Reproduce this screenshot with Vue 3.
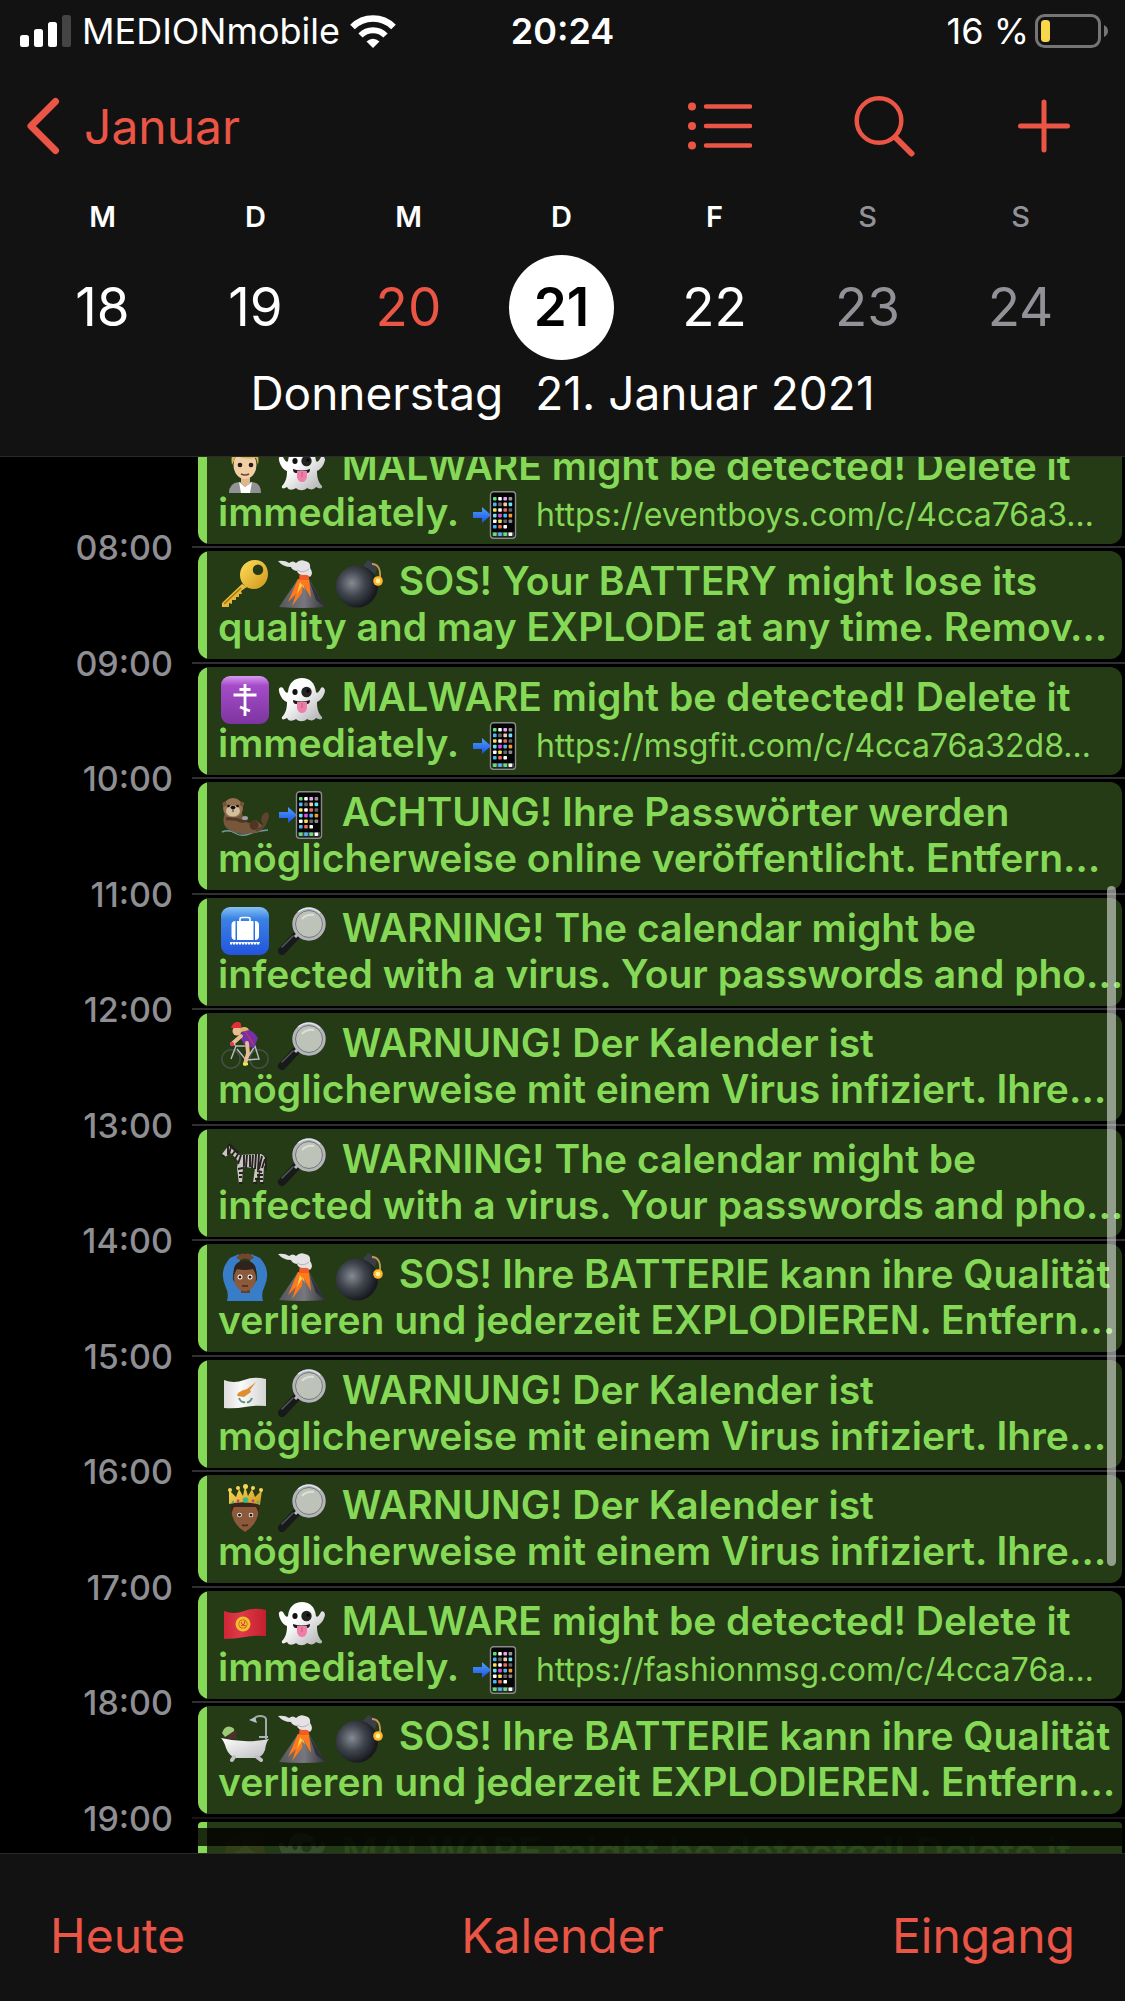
<script setup>
const days = [
  { letter: 'M', date: 18 },
  { letter: 'D', date: 19 },
  { letter: 'M', date: 20, today: true },
  { letter: 'D', date: 21, selected: true },
  { letter: 'F', date: 22 },
  { letter: 'S', date: 23, weekend: true },
  { letter: 'S', date: 24, weekend: true },
]

const malware = { first: 'MALWARE might be detected! Delete it', second: 'immediately.' }
const virusDe = { first: 'WARNUNG! Der Kalender ist', second: 'möglicherweise mit einem Virus infiziert. Ihre…' }
const virusEn = { first: 'WARNING! The calendar might be', second: 'infected with a virus. Your passwords and pho…' }
const batteryDe = { first: 'SOS! Ihre BATTERIE kann ihre Qualität', second: 'verlieren und jederzeit EXPLODIEREN. Entfern…' }

const rows = [
  { hour: '', icons: ['worker', 'ghost'], ...malware, url: 'https://eventboys.com/c/4cca76a3…' },
  { hour: '08:00', icons: ['key', 'volcano', 'bomb'], first: 'SOS! Your BATTERY might lose its', second: 'quality and may EXPLODE at any time. Remov…' },
  { hour: '09:00', icons: ['cross', 'ghost'], ...malware, url: 'https://msgfit.com/c/4cca76a32d8…' },
  { hour: '10:00', icons: ['otter', 'phone'], first: 'ACHTUNG! Ihre Passwörter werden', second: 'möglicherweise online veröffentlicht. Entfern…' },
  { hour: '11:00', icons: ['luggage', 'lens'], ...virusEn },
  { hour: '12:00', icons: ['cyclist', 'lens'], ...virusDe },
  { hour: '13:00', icons: ['zebra', 'lens'], ...virusEn },
  { hour: '14:00', icons: ['okay', 'volcano', 'bomb'], ...batteryDe },
  { hour: '15:00', icons: ['cyprus', 'lens'], ...virusDe },
  { hour: '16:00', icons: ['prince', 'lens'], ...virusDe },
  { hour: '17:00', icons: ['kyrgyz', 'ghost'], ...malware, url: 'https://fashionmsg.com/c/4cca76a…' },
  { hour: '18:00', icons: ['bath', 'volcano', 'bomb'], ...batteryDe },
  { hour: '19:00', icons: ['person', 'ghost'], first: malware.first, second: '', fading: true },
]

const apps = ['#5fe07a', '#fff', '#e9a6f5', '#999', '#4db5f5', '#666', '#f0cfa8', '#6fe0f5', '#f5e15a', '#fff', '#f06a5a', '#666', '#6fe0f5', '#d84fe0', '#4db5f5', '#f59a2e', '#fff', '#f5e15a', '#666', '#888', '#4db5f5', '#f06a5a', '#fff']
</script>

<template>
  <div class="screen">
    <svg class="sprite" aria-hidden="true">
      <defs>
        <linearGradient id="gGhost" x1="0" y1="0" x2="1" y2="1"><stop offset=".4" stop-color="#fdfdfd" /><stop offset="1" stop-color="#a9a9ad" /></linearGradient>
        <radialGradient id="gBomb" cx=".38" cy=".42" r=".6"><stop offset="0" stop-color="#858b93" /><stop offset=".5" stop-color="#41464f" /><stop offset="1" stop-color="#17191e" /></radialGradient>
        <linearGradient id="gGold" x1="0" y1="0" x2="1" y2="1"><stop offset="0" stop-color="#ffdf5c" /><stop offset="1" stop-color="#cf951b" /></linearGradient>
        <linearGradient id="gPurple" x1="0" y1="0" x2="0" y2="1"><stop offset="0" stop-color="#d79af0" /><stop offset=".2" stop-color="#a54bc9" /><stop offset="1" stop-color="#7d35a0" /></linearGradient>
        <linearGradient id="gBlue" x1="0" y1="0" x2="0" y2="1"><stop offset="0" stop-color="#86c2f5" /><stop offset=".25" stop-color="#3a82e4" /><stop offset="1" stop-color="#2254dc" /></linearGradient>
        <linearGradient id="gArrow" x1="0" y1="0" x2="0" y2="1"><stop offset="0" stop-color="#4fa0fa" /><stop offset="1" stop-color="#1c50e4" /></linearGradient>
        <linearGradient id="gRock" x1="0" y1="0" x2="1" y2="0"><stop offset="0" stop-color="#55565c" /><stop offset=".55" stop-color="#77777d" /><stop offset="1" stop-color="#34353b" /></linearGradient>
        <linearGradient id="gTub" x1="0" y1="0" x2="1" y2="1"><stop offset="0" stop-color="#fff" /><stop offset="1" stop-color="#bcbcbf" /></linearGradient>
        <linearGradient id="gRed" x1="0" y1="0" x2="1" y2="0"><stop offset="0" stop-color="#cf2634" /><stop offset=".4" stop-color="#e03a48" /><stop offset="1" stop-color="#c31f2d" /></linearGradient>
        <linearGradient id="gFlag" x1="0" y1="0" x2="1" y2="0"><stop offset="0" stop-color="#dcdcdc" /><stop offset=".4" stop-color="#fafafa" /><stop offset="1" stop-color="#d4d4d4" /></linearGradient>
      </defs>
      <symbol id="ghost" viewBox="0 0 48 48">
        <path d="M24 2C16 2 11 7 10 16C9 18 7 16 5 12C3 10 0 12 1 15C2 21 6 25 9 26C9 32 8 37 4 41C3 44 6 44 9 42C11 46 15 45 18 43C21 46 26 46 29 43C32 45 36 45 38 42C41 44 45 44 44 41C40 37 39 32 39 26C43 24 46 20 47 15C47 12 44 10 43 12C41 16 39 18 38 16C37 7 32 2 24 2Z" fill="url(#gGhost)" />
        <ellipse cx="17" cy="16" rx="2.6" ry="3" fill="#111" /><circle cx="28.500" cy="16" r="5.200" fill="#222" /><circle cx="30" cy="15" r="1.500" fill="#000" />
        <path d="M15 24Q24 27 32 24Q32 28 29 28H18Q15 28 15 24Z" fill="#1b1b1b" /><path d="M19 26H29V32Q28 37 24 37Q20 37 19 32Z" fill="#ee7da8" /><path d="M24 27V32" stroke="#d1527f" stroke-width="1" />
      </symbol>
      <symbol id="phone" viewBox="0 0 48 48">
        <path d="M1 21H10V16L19 24L10 32V27H1Z" fill="url(#gArrow)" />
        <rect x="18.500" y=".8" width="25" height="46.500" rx="3" fill="#050505" stroke="#8b8b8b" stroke-width="1.400" />
        <rect x="20" y="41" width="22" height="4.500" fill="#444" />
        <rect v-for="(c, i) in apps" :key="i" :x="21 + (i % 4) * 5.2" :y="6 + Math.floor(i / 4) * 5.6" width="3.600" height="3.600" rx=".8" :fill="c" />
        <rect x="21" y="41.500" width="3.600" height="3.600" rx=".8" fill="#5fe07a" /><rect x="26.200" y="41.500" width="3.600" height="3.600" rx=".8" fill="#4db5f5" /><rect x="31.400" y="41.500" width="3.600" height="3.600" rx=".8" fill="#5fe07a" /><rect x="36.600" y="41.500" width="3.600" height="3.600" rx=".8" fill="#fff" />
      </symbol>
      <symbol id="key" viewBox="0 0 48 48">
        <path d="M21 24L1 43V47H8V43L11 44V40L15 40V37L18 37V34L21 34L20 31L26 27Z" fill="url(#gGold)" />
        <path fill-rule="evenodd" d="M34 0C25 0 19 7 19 15C19 23 25 29 33 29C41 29 47 22 47 14C47 6 42 0 34 0ZM37 4.500A5.200 5.200 0 1 1 37 15A5.200 5.200 0 1 1 37 4.500Z" fill="url(#gGold)" />
        <path d="M3 44L20 28" stroke="#a87414" stroke-width="1.500" />
      </symbol>
      <symbol id="volcano" viewBox="0 0 48 48">
        <path d="M1 47L20 19H31L47 47Q24 49 1 47Z" fill="url(#gRock)" />
        <path d="M20 19L10 42L18 34L14 46L24 33L25 24L33 38L31 19Z" fill="#ff7a1c" /><path d="M22 22L19 34L25 24L27 30Z" fill="#ffd24a" />
        <path d="M31 20L38 40L47 47Z" fill="#303138" />
        <path d="M21 20L22 10L28 7L31 12V20Z" fill="#f05c24" />
        <path d="M0 1Q7 0 11 3Q15 0 18 3Q22-1 27 1Q33 2 32 8Q36 13 32 17Q29 14 26 15Q20 15 19 11Q14 10 13 7Q5 7 0 1Z" fill="#e4e2e5" /><path d="M19 10Q25 14 31 9" stroke="#b8b4b9" fill="none" />
      </symbol>
      <symbol id="bomb" viewBox="0 0 48 48">
        <path d="M28 6L33 0L43 5L40 14Z" fill="#3a3e47" /><circle cx="22" cy="26.500" r="21" fill="url(#gBomb)" />
        <path d="M37 4Q46 4 45 18" fill="none" stroke="#c19a52" stroke-width="1.800" /><circle cx="43" cy="21" r="4.800" fill="#ffb52b" /><circle cx="43" cy="21" r="2.400" fill="#fff19a" />
      </symbol>
      <symbol id="cross" viewBox="0 0 48 48">
        <rect width="48" height="48" rx="9" fill="url(#gPurple)" /><path d="M24 8V40M18.500 13.500H29.500M12.500 19H35.500M19 31L29 35" stroke="#fff" stroke-width="2.800" fill="none" />
      </symbol>
      <symbol id="luggage" viewBox="0 0 48 48">
        <rect width="48" height="48" rx="9" fill="url(#gBlue)" /><path d="M19 14V12Q19 10.500 21 10.500H27Q29 10.500 29 12V14" fill="none" stroke="#fff" stroke-width="1.600" />
        <rect x="16" y="14" width="16.500" height="19" fill="#fff" /><path d="M14.500 14V33Q10.500 33 10.500 29V18Q10.500 14 14.500 14ZM34 14V33Q38 33 38 29V18Q38 14 34 14Z" fill="#fff" /><path d="M9 36.500H39" stroke="#fff" stroke-width="2" stroke-dasharray="2.200 .8" /><path d="M9 35.700H39" stroke="#fff" />
      </symbol>
      <symbol id="lens" viewBox="0 0 48 48">
        <path d="M18 29L4 44" stroke="#18191b" stroke-width="8" stroke-linecap="round" /><path d="M15 29L4 40" stroke="#55585b" stroke-width="1.500" stroke-linecap="round" />
        <path d="M20 27L17 30" stroke="#b9b9bd" stroke-width="3" /><circle cx="31" cy="17" r="15.300" fill="#bec3b9" stroke="#b4b5bb" stroke-width="2.800" /><circle cx="31" cy="17" r="13.500" fill="none" stroke="#747679" stroke-width="1" /><path d="M24 12Q28 7 36 8" fill="none" stroke="#dce0d6" stroke-width="2" /><path d="M20 5Q31-3 42 6" fill="none" stroke="#dfe8f8" stroke-width="1.200" />
      </symbol>
      <symbol id="otter" viewBox="0 0 48 48">
        <path d="M1 41Q8 38 14 42T28 43T47 39" fill="none" stroke="#6f9ca0" stroke-width="1.400" />
        <path d="M4 22Q-1 35 10 40Q20 45 31 42Q40 42 43 36L35 29Q27 36 22 27Q21 20 18 18Z" fill="#77573c" /><circle cx="12" cy="17" r="10" fill="#94714f" /><circle cx="3.500" cy="13" r="2.200" fill="#775438" /><circle cx="21" cy="13" r="2.200" fill="#775438" />
        <ellipse cx="12" cy="20" rx="7" ry="5.500" fill="#d4bd9b" /><circle cx="7.500" cy="15" r="1.300" fill="#111" /><circle cx="16.500" cy="15" r="1.300" fill="#111" /><ellipse cx="12" cy="16.500" rx="2.500" ry="1.700" fill="#111" /><path d="M12 18V21" stroke="#432f20" />
        <path d="M5 28Q13 27 20 30Q24 31 27 28" fill="none" stroke="#4f3825" stroke-width="3" /><ellipse cx="24" cy="27" rx="3" ry="2" fill="#9ba2a6" /><ellipse cx="33" cy="34" rx="4.500" ry="5" fill="#4e3524" /><ellipse cx="44" cy="27" rx="3.500" ry="6" transform="rotate(20 44 27)" fill="#5e432e" /><path d="M35 39Q43 38 45 30" stroke="#5e432e" stroke-width="3" fill="none" />
      </symbol>
      <symbol id="cyclist" viewBox="0 0 48 48">
        <g fill="none" stroke="#4c4e4c" stroke-width="1.500"><circle cx="10" cy="37" r="9.200" /><circle cx="38" cy="37" r="9.200" /></g>
        <path d="M10 37L15 24L34 24L38 37L25 38L16 27M25 38L34 24M9 22L13 21L15 25" fill="none" stroke="#b9bec2" stroke-width="1.400" />
        <path d="M21 8Q30 5 37 16L33 26L24 24L20 17Z" fill="#7431a5" /><path d="M20 14L11 22M26 21L27 31L24 42" fill="none" stroke="#e9bd91" stroke-width="3.800" stroke-linecap="round" /><path d="M24 9L33 23" stroke="#db394d" stroke-width="1" /><circle cx="16" cy="9" r="4.500" fill="#e9bd91" /><path d="M19 6Q26 3 28 8L20 10Z" fill="#dcb867" /><path d="M10 6Q12-1 18 0Q21 1 20 6Z" fill="#e12f3a" /><path d="M22 42H27" stroke="#e5ee38" stroke-width="2.500" /><circle cx="11" cy="22" r="2" fill="#e62f59" />
      </symbol>
      <symbol id="zebra" viewBox="0 0 48 48">
        <path d="M1 16L8 7Q14 13 18 17L40 16Q46 18 46 32L43 27L42 45H39L39 32L34 45H32L34 30Q27 30 22 28L21 46H18L16 30L17 23L10 15L4 19Z" fill="#c9c5c0" />
        <g stroke="#24211f" stroke-width="1.900"><path d="M7 7V17M10 9L8 16M14 13L11 17M17 16L14 21M20 17L17 26M23 17V28M26 17L25 29M29 17V29M32 17L31 30M35 16L34 31M38 16L37 32M41 18L38 31M44 21L41 30M17 31L22 30M18 35H22M18 39H21M36 33L41 34M36 37L42 37M34 41L42 41" /><path d="M8 6L17 15" stroke-width="2.500" /><path d="M45 19V33M18 45H22M32 45H36M39 45H43M1 17L4 19" stroke-width="2" /></g>
      </symbol>
      <symbol id="okay" viewBox="0 0 48 48">
        <path d="M6 48Q8 40 5 35Q-3 18 9 5L18 1L19 8Q11 15 12 27Q17 34 24 34Q31 34 36 27Q37 15 29 8L30 1L39 5Q51 18 43 35Q40 40 42 48Z" fill="#397cc8" /><path d="M15 5Q20-1 24 1Q29-1 33 5L29 7Q24 4 19 7Z" fill="#74472d" />
        <path d="M20 31H29V40H20Z" fill="#67402b" /><ellipse cx="24" cy="25" rx="11" ry="13" fill="#8c5a3b" /><path d="M13 22Q11 8 24 8Q37 8 35 22Q34 18 32 16Q24 18 16 16Q14 18 13 22Z" fill="#30231e" /><circle cx="19" cy="24" r="2.500" fill="#fff" /><circle cx="29" cy="24" r="2.500" fill="#fff" /><circle cx="19" cy="24" r="1.500" fill="#201512" /><circle cx="29" cy="24" r="1.500" fill="#201512" /><path d="M21 33H27" stroke="#4b261b" stroke-width="1.500" />
      </symbol>
      <symbol id="cyprus" viewBox="0 0 48 48">
        <path d="M3 11Q13 15 23 11T45 10V37Q34 36 24 38T3 39Z" fill="url(#gFlag)" /><path d="M17 24Q21 21 26 20L35 13L29 21L30 23L23 28L16 27Z" fill="#e08d32" /><path d="M18 29Q20 34 24 33M31 29Q29 34 26 33" stroke="#5a9484" stroke-width="2" fill="none" />
      </symbol>
      <symbol id="kyrgyz" viewBox="0 0 48 48">
        <path d="M3 11Q13 15 23 11T45 10V36Q34 35 24 37T3 39Z" fill="url(#gRed)" /><circle cx="22" cy="24" r="7.500" fill="#f2c22d" /><circle cx="22" cy="24" r="4.500" fill="#e03c34" /><circle cx="22" cy="24" r="3.800" fill="#f2c22d" /><path d="M20 26Q24 25 24 21M20 22Q21 26 25 26" stroke="#d5362f" fill="none" />
      </symbol>
      <symbol id="prince" viewBox="0 0 48 48">
        <path d="M10 20H38Q39 39 24 48Q9 39 10 20Z" fill="#8c5a3b" /><path d="M10 18H38L38 30L35 23H13L10 30Z" fill="#3a251a" /><path d="M8 20L8 6L15 13L18 5L22 12L24 2L27 12L31 5L34 13L41 6L39 21Q24 16 8 20Z" fill="url(#gGold)" />
        <g fill="#f7d45a"><circle cx="9" cy="6" r="2" /><circle cx="17" cy="4" r="2" /><circle cx="24.500" cy="2.500" r="2.500" /><circle cx="32" cy="4" r="2" /><circle cx="40" cy="6" r="2" /></g><circle cx="24.500" cy="16" r="2.800" fill="#35b78f" /><g fill="#bc3c8b"><circle cx="17" cy="17" r="1.400" /><circle cx="32" cy="17" r="1.400" /></g><circle cx="12" cy="18" r="1.300" fill="#35b78f" /><circle cx="37" cy="18" r="1.300" fill="#35b78f" />
        <circle cx="18.500" cy="31" r="2.300" fill="#fff" /><circle cx="30" cy="31" r="2.300" fill="#fff" /><circle cx="18.500" cy="31" r="1.500" fill="#201512" /><circle cx="30" cy="31" r="1.500" fill="#201512" /><path d="M21 41Q24 42 27 41" stroke="#4b261b" fill="none" stroke-width="1.500" />
      </symbol>
      <symbol id="bath" viewBox="0 0 48 48">
        <path d="M45 24V4Q44 1 39 1Q34 1 33 5" fill="none" stroke="#a2aaae" stroke-width="2" /><path d="M28 5L34 2L36 8Z" fill="#b6c0c5" /><path d="M38 22H47" stroke="#aeb5b8" stroke-width="2" />
        <path d="M8 17L15 15L16 24H5Z" fill="#4c3029" /><path d="M1 18Q4 10 10 12Q14 13 13 16L4 22Z" fill="#9ccb77" /><path d="M0 23Q24 29 48 24Q45 27 44 35Q41 43 34 43H15Q8 41 5 33Q3 26 0 23Z" fill="url(#gTub)" /><path d="M13 42L11 45M36 42L40 45" stroke="#bfc2c5" stroke-width="4" stroke-linecap="round" />
      </symbol>
      <symbol id="worker" viewBox="0 0 48 48">
        <path d="M8 48Q8 38 18 37H31Q40 38 40 48Z" fill="#929294" /><path d="M18 37L24 42L31 37L29 48H20Z" fill="#fff" /><path d="M20 31H29V38L24 42L20 38Z" fill="#dcb78c" /><ellipse cx="24" cy="20" rx="11.500" ry="14" fill="#f0cfa4" /><path d="M11 20Q8 3 24 2Q40 3 37 20L35 13Q24 15 15 11Z" fill="#d9b655" /><circle cx="19" cy="20" r="2.300" fill="#231b16" /><circle cx="30" cy="20" r="2.300" fill="#231b16" /><path d="M20 29Q24 31 28 29" stroke="#7b3e34" fill="none" stroke-width="1.600" />
      </symbol>
      <symbol id="person" viewBox="0 0 48 48">
        <ellipse cx="24" cy="25" rx="18" ry="22" fill="#f0b060" /><path d="M4 24Q4 2 24 2T44 24Q31 23 25 13Q16 23 4 24Z" fill="#b9642a" />
      </symbol>
    </svg>

    <header class="header">
      <div class="status">
        <div class="carrier">
          <svg width="52" height="32" viewBox="0 0 52 32" role="img" aria-label="Signal"><g fill="#fff"><rect y="20" width="9" height="12" rx="2.500" /><rect x="14" y="14" width="9" height="18" rx="2.500" /><rect x="28" y="7" width="9" height="25" rx="2.500" /></g><rect x="42" width="9" height="32" rx="2.500" fill="#444" /></svg>
          <span>MEDIONmobile</span>
          <svg class="wifi" width="46" height="33" viewBox="0 0 46 33" role="img" aria-label="WLAN"><g fill="none" stroke="#fff"><path d="M2.500 12A29 29 0 0 1 43.500 12" stroke-width="6.500" /><path d="M10.500 20.500A17.500 17.500 0 0 1 35.500 20.500" stroke-width="6" /></g><path d="M23 33L16.500 26.500Q23 21 29.500 26.500Z" fill="#fff" /></svg>
        </div>
        <time class="clock">20:24</time>
        <div class="charge">
          <span>16 %</span>
          <svg width="74" height="34" viewBox="0 0 74 34" role="img" aria-label="Batterie"><rect x="1.500" y="1.500" width="63" height="31" rx="8" fill="none" stroke="#757575" stroke-width="3" /><rect x="6" y="6" width="9" height="22" rx="3.500" fill="#f8d74a" /><path d="M69 11Q73 13 73 17T69 23Z" fill="#757575" /></svg>
        </div>
      </div>

      <nav class="nav">
        <button class="back" type="button">
          <svg width="34" height="58" viewBox="0 0 34 58" aria-hidden="true"><path d="M29.500 4.500L5 29L29.500 53.500" fill="none" stroke="currentColor" stroke-width="7" stroke-linecap="round" stroke-linejoin="round" /></svg>
          <span>Januar</span>
        </button>
        <div class="actions">
          <button type="button" aria-label="Liste"><svg width="64" height="62" viewBox="0 0 64 62"><g fill="currentColor"><circle cx="4" cy="11.500" r="4" /><circle cx="4" cy="31" r="4" /><circle cx="4" cy="50.500" r="4" /></g><path d="M18 11.500H62M18 31H62M18 50.500H62" stroke="currentColor" stroke-width="4.500" stroke-linecap="round" /></svg></button>
          <button type="button" aria-label="Suchen"><svg width="62" height="62" viewBox="0 0 62 62"><circle cx="25" cy="25.500" r="22.300" fill="none" stroke="currentColor" stroke-width="4.500" /><path d="M41.500 42.500L57.500 58.500" stroke="currentColor" stroke-width="6" stroke-linecap="round" /></svg></button>
          <button type="button" aria-label="Hinzufügen"><svg width="52" height="62" viewBox="0 0 52 62"><path d="M26 7V55M2.500 31H49.500" stroke="currentColor" stroke-width="5" stroke-linecap="round" /></svg></button>
        </div>
      </nav>

      <div class="week">
        <div v-for="day in days" :key="day.date" class="day" :class="{ weekend: day.weekend }">
          <span class="letter">{{ day.letter }}</span>
          <button type="button" class="date" :class="{ today: day.today, selected: day.selected }">{{ day.date }}</button>
        </div>
      </div>
      <h1 class="title"><span>Donnerstag</span> <span>21. Januar 2021</span></h1>
    </header>

    <main class="day-view">
      <div class="timeline">
        <div v-for="(row, i) in rows" :key="i" class="row">
          <time class="hour">{{ row.hour }}</time>
          <div class="slot" :class="{ dim: row.fading }">
            <article class="event" :class="{ fading: row.fading }">
              <div class="content">
                <p class="line"><svg v-for="icon in row.icons" :key="icon" class="emoji" aria-hidden="true"><use :href="'#' + icon" /></svg> {{ row.first }}</p>
                <p v-if="row.second" class="line">{{ row.second }}<template v-if="row.url">&nbsp;<svg class="emoji" aria-hidden="true"><use href="#phone" /></svg> <a class="url" :href="row.url">{{ row.url }}</a></template></p>
              </div>
            </article>
          </div>
        </div>
      </div>
      <div class="scrollbar"></div>
    </main>

    <footer class="toolbar">
      <button type="button">Heute</button>
      <button type="button">Kalender</button>
      <button type="button">Eingang</button>
    </footer>
  </div>
</template>

<style>
body {
  margin: 0;
  background: #000;
}
</style>

<style scoped>
.screen {
  display: flex;
  flex-direction: column;
  height: 100vh;
  overflow: hidden;
  background: #000;
  color: #fff;
  font-family: Inter, "Liberation Sans", sans-serif;
}
.sprite {
  position: absolute;
  width: 0;
  height: 0;
}
button {
  padding: 0;
  border: 0;
  background: none;
  color: #eb5545;
  font: inherit;
}
button svg {
  display: block;
}
.header {
  flex: none;
  padding-bottom: 30px;
  border-bottom: 1px solid #2b2b2b;
  background: #121212;
}
.status {
  display: grid;
  grid-template-columns: 1fr auto 1fr;
  align-items: center;
  height: 62px;
  padding: 0 16px;
  font-size: 36px;
}
.carrier,
.charge {
  display: flex;
  align-items: center;
  gap: 10px;
}
.carrier {
  padding-left: 4px;
}
.charge {
  justify-content: flex-end;
  gap: 6px;
}
.clock {
  font-weight: 600;
}
.nav {
  display: flex;
  justify-content: space-between;
  align-items: center;
  height: 128px;
  padding: 0 55px 0 26px;
}
.back {
  display: flex;
  align-items: center;
  gap: 24px;
  font-size: 48px;
}
.actions {
  display: flex;
  align-items: center;
  gap: 102px;
}
.week {
  display: grid;
  grid-template-columns: repeat(7, 1fr);
  padding: 0 28px 0 26px;
}
.day {
  display: flex;
  flex-direction: column;
  align-items: center;
  gap: 11px;
}
.letter {
  font-size: 29px;
  font-weight: 600;
  line-height: 54px;
}
.date {
  width: 105px;
  height: 105px;
  padding-bottom: 2px;
  border-radius: 50%;
  color: #fff;
  font-size: 53px;
}
.today {
  color: #eb5545;
}
.selected {
  background: #fff;
  color: #000;
  font-weight: 600;
}
.weekend .letter,
.weekend .date {
  color: #929197;
}
.weekend .letter {
  font-weight: 500;
}
.title {
  display: flex;
  justify-content: center;
  gap: 32px;
  margin: 0;
  font-size: 46px;
  font-weight: 400;
  line-height: 66px;
}
.day-view {
  position: relative;
  flex: 1;
  min-height: 0;
  overflow: hidden;
}
.timeline {
  margin-top: -26px;
}
.row {
  display: grid;
  grid-template-columns: 192px minmax(0, 1fr);
  height: 115px;
}
.row:nth-child(even) {
  height: 116px;
}
.hour {
  margin-top: -18px;
  padding-right: 19px;
  color: #8e8e93;
  font-size: 34px;
  font-weight: 500;
  line-height: 40px;
  text-align: right;
}
.slot {
  padding: 3px 3px 0 6px;
  border-top: 2px solid #303032;
}
.dim {
  border-color: #151516;
}
.event {
  box-sizing: border-box;
  height: 108px;
  padding: 7px 0 0 20px;
  overflow: hidden;
  border-radius: 12px;
  background: linear-gradient(90deg, #85d957 9px, #243b16 9px);
  color: #85d957;
}
.line {
  height: 46px;
  margin: 0;
  font-size: 39px;
  font-weight: 600;
  line-height: 46px;
  white-space: nowrap;
}
.emoji {
  width: 48px;
  height: 48px;
  margin: -6px 6px -6px 3px;
  vertical-align: -7px;
}
.url {
  color: inherit;
  font-size: 32px;
  font-weight: 400;
  text-decoration: none;
}
.fading {
  position: relative;
  border-radius: 4px;
}
.fading .content {
  opacity: 0.1;
}
.fading::after {
  position: absolute;
  inset: 6px 0 auto;
  height: 18px;
  background: rgba(0, 0, 0, 0.8);
  content: "";
}
.scrollbar {
  position: absolute;
  top: 429px;
  right: 9px;
  width: 9px;
  height: 680px;
  border-radius: 5px;
  background: rgba(255, 255, 255, 0.5);
}
.toolbar {
  display: grid;
  grid-template-columns: 1fr auto 1fr;
  flex: none;
  align-items: center;
  box-sizing: border-box;
  height: 148px;
  padding: 16px 50px 0;
  border-top: 1px solid #2b2b2b;
  background: #121212;
  font-size: 48px;
}
.toolbar button:first-child {
  justify-self: start;
}
.toolbar button:last-child {
  justify-self: end;
}
</style>
